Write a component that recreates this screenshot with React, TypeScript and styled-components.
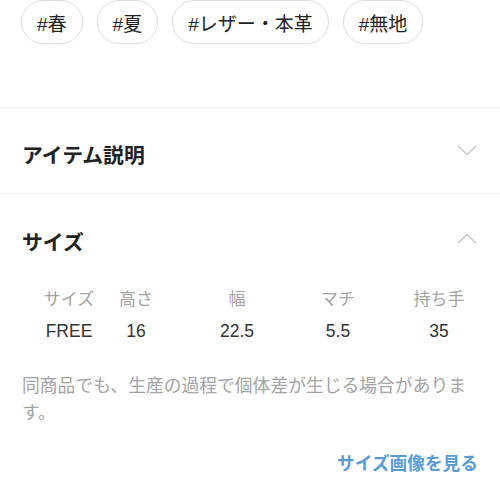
import React from 'react';
import styled, { createGlobalStyle } from 'styled-components';

const GlobalStyle = createGlobalStyle`
  body {
    margin: 0;
    background: #fff;
    overflow: hidden;
    font-family: 'Liberation Sans', 'Noto Sans CJK JP', sans-serif;
    color: #222;
  }
`;

const tags = ['#春', '#夏', '#レザー・本革', '#無地'];

const sizeHeaders = ['サイズ', '高さ', '幅', 'マチ', '持ち手'];
const sizeValues = ['FREE', '16', '22.5', '5.5', '35'];

const Chevron = ({ up }: { up?: boolean }) => (
  <svg width="20" height="11" viewBox="0 0 20 11">
    <polyline
      points={up ? '1,10 10,1.5 19,10' : '1,1 10,9.5 19,1'}
      fill="none"
      stroke="#c4c4c4"
      strokeWidth="1.4"
    />
  </svg>
);

const App = () => {
  return (
    <>
      <GlobalStyle />
      <S.Page>
        <S.TagRow>
          {tags.map((t) => (
            <S.Tag key={t}>{t}</S.Tag>
          ))}
        </S.TagRow>

        <S.Section>
          <S.Header $height={85}>
            <S.Title>アイテム説明</S.Title>
            <Chevron />
          </S.Header>
        </S.Section>

        <S.Section>
          <S.Header $height={88}>
            <S.Title>サイズ</S.Title>
            <Chevron up />
          </S.Header>
          <S.SizeTable>
            {sizeHeaders.map((h) => (
              <S.HeadCell key={h}>{h}</S.HeadCell>
            ))}
            {sizeValues.map((v, i) => (
              <S.ValueCell key={i}>{v}</S.ValueCell>
            ))}
          </S.SizeTable>
          <S.Note>同商品でも、生産の過程で個体差が生じる場合があります。</S.Note>
          <S.LinkRow>
            <S.SizeLink>サイズ画像を見る</S.SizeLink>
          </S.LinkRow>
        </S.Section>
      </S.Page>
    </>
  );
};

export default App;

const S = {
  Page: styled.div`
    width: 500px;
  `,
  TagRow: styled.div`
    display: flex;
    gap: 14px;
    padding: 0 21px;
    height: 107px;
    align-items: flex-start;
  `,
  Tag: styled.div`
    display: flex;
    align-items: center;
    height: 44px;
    box-sizing: border-box;
    padding: 0 15px;
    border: 1px solid #dedede;
    border-radius: 22px;
    font-size: 19px;
    color: #222;
    white-space: nowrap;
  `,
  Section: styled.div`
    border-top: 1px solid #eeeeee;
  `,
  Header: styled.div<{ $height: number }>`
    display: flex;
    align-items: center;
    justify-content: space-between;
    height: ${(p) => p.$height}px;
    padding: 0 23px 0 22px;
  `,
  Title: styled.div`
    padding-top: 6px;
    font-size: 20.8px;
    font-weight: 700;
    color: #222;
  `,
  SizeTable: styled.div`
    display: grid;
    grid-template-columns: 54px 80px 122px 80px 122px;
    grid-auto-rows: 34px;
    padding-left: 42px;
    margin-top: -2px;
  `,
  HeadCell: styled.div`
    display: flex;
    align-items: center;
    justify-content: center;
    white-space: nowrap;
    font-size: 17px;
    color: #a3a3a3;
  `,
  ValueCell: styled.div`
    display: flex;
    align-items: center;
    justify-content: center;
    white-space: nowrap;
    font-size: 17.5px;
    color: #333;
  `,
  Note: styled.p`
    margin: 25px 0 0;
    padding: 0 26px 0 22px;
    font-size: 17.8px;
    line-height: 27px;
    color: #a3a3a3;
  `,
  LinkRow: styled.div`
    display: flex;
    justify-content: flex-end;
    padding: 0 22px;
    margin-top: 24px;
  `,
  SizeLink: styled.a`
    font-size: 17.7px;
    line-height: 27px;
    font-weight: 700;
    color: #5a9bd2;
    cursor: pointer;
  `
};
